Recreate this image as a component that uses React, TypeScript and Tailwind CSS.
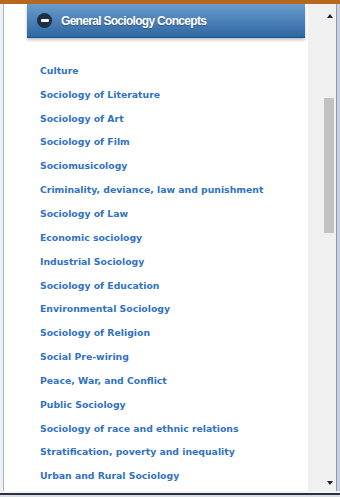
import React from "react";

const items = [
  "Culture",
  "Sociology of Literature",
  "Sociology of Art",
  "Sociology of Film",
  "Sociomusicology",
  "Criminality, deviance, law and punishment",
  "Sociology of Law",
  "Economic sociology",
  "Industrial Sociology",
  "Sociology of Education",
  "Environmental Sociology",
  "Sociology of Religion",
  "Social Pre-wiring",
  "Peace, War, and Conflict",
  "Public Sociology",
  "Sociology of race and ethnic relations",
  "Stratification, poverty and inequality",
  "Urban and Rural Sociology",
];

export default function App() {
  return (
    <div className="w-[340px] h-[497px] flex flex-col bg-white overflow-hidden">
      <div className="h-[4px] bg-[#b8671e] shrink-0" />
      <div className="flex flex-1 min-h-0">
        <div className="w-[4px] shrink-0 bg-[#eef0f3] flex justify-end">
          <div className="w-[1px] bg-[#a9b3c2]" />
        </div>
        <div className="flex-1 min-w-0 flex flex-col">
          <div className="ml-[23px] w-[278px] h-[34px] shrink-0 flex items-center bg-gradient-to-b from-[#6a9ccd] to-[#2f67a3] border-b border-[#1f4f85] shadow-[0_2px_3px_rgba(0,0,0,0.25)]">
            <div className="ml-[10px] w-[15px] h-[15px] rounded-full bg-[#1c2f45] flex items-center justify-center">
              <div className="w-[8px] h-[3px] bg-white rounded-[1px]" />
            </div>
            <span className="ml-[9px] text-white font-bold text-[12px] tracking-[-0.7px] font-['Liberation_Sans',Arial,sans-serif] [text-shadow:0_1px_1px_rgba(0,0,0,0.3)]">
              General Sociology Concepts
            </span>
          </div>
          <div className="mt-[21px] pl-[36px] flex flex-col">
            {items.map((t) => (
              <div
                key={t}
                className="h-[23.85px] flex items-center text-[#3172c2] font-bold text-[9.3px] font-['DejaVu_Sans',Verdana,sans-serif] whitespace-nowrap"
              >
                {t}
              </div>
            ))}
          </div>
        </div>
        <div className="w-[28px] shrink-0 bg-[#f0f0f0] relative">
          <svg className="absolute left-[19px] top-[10px]" width="6" height="4" viewBox="0 0 6 4">
            <path d="M3 0 L6 4 L0 4 Z" fill="#222" />
          </svg>
          <div className="absolute left-[16px] top-[94px] w-[10px] h-[135px] bg-[#c1c1c1]" />
          <svg className="absolute left-[19px] bottom-[6px]" width="6" height="4" viewBox="0 0 6 4">
            <path d="M0 0 L6 0 L3 4 Z" fill="#222" />
          </svg>
        </div>
        <div className="w-[4px] shrink-0 bg-[#c9d1de] flex">
          <div className="w-[1px] bg-[#8d9bb3]" />
        </div>
      </div>
      <div className="h-[6px] shrink-0 flex flex-col">
        <div className="h-[2px] bg-[#f4f4f4]" />
        <div className="h-[2px] bg-[#2b3140]" />
        <div className="h-[2px] bg-[#d9dde4]" />
      </div>
    </div>
  );
}
